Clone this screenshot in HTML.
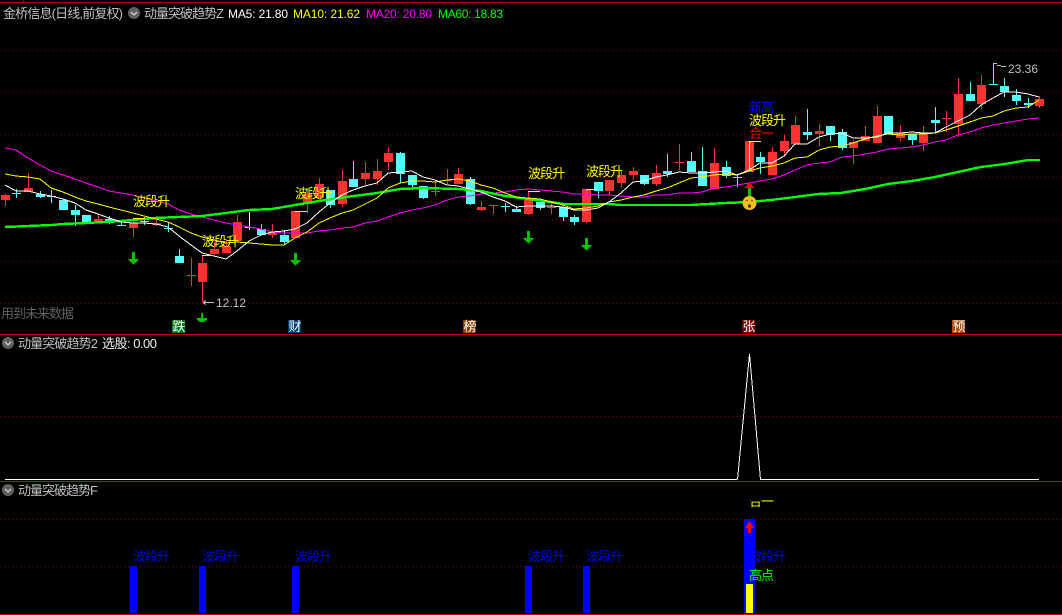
<!DOCTYPE html>
<html><head><meta charset="utf-8"><style>
html,body{margin:0;padding:0;background:#000;width:1062px;height:615px;overflow:hidden}
svg{display:block;position:absolute;left:0;top:0}
text{font-family:"WenQuanYi Zen Hei","Liberation Sans","Noto Sans CJK SC",sans-serif;font-size:13px;letter-spacing:-1px}
.l{font-family:"Liberation Sans",sans-serif;font-size:12px;letter-spacing:0}
</style></head><body>
<svg width="1062" height="615" viewBox="0 0 1062 615" xmlns="http://www.w3.org/2000/svg">
<defs><clipPath id="c1"><rect x="740" y="500" width="50" height="8"/></clipPath></defs>
<g shape-rendering="crispEdges">
<!-- grid -->
<path d="M0 50.5H1062M0 92.5H1062M0 134.5H1062M0 177.5H1062M0 219.5H1062M0 261.5H1062M0 303.5H1062M0 416.5H1062M0 519.5H1062M0 566.5H1062" stroke="#800000" stroke-width="1" stroke-dasharray="1 3" fill="none"/>
<!-- separators -->
<path d="M0 2.5H1062M23.5 0V3" stroke="#a00000" fill="none"/>
<path d="M0 334.5H1062M0 481.5H1062M0 614.5H1062" stroke="#c00000" fill="none"/>
<!-- red candles -->
<path fill="#ff3232" d="M1 195h9V200h-9zM24 188h9V192h-9zM94 219h9V222h-9zM129 223h9V228h-9zM152 223h9V225h-9zM198 263h9V282h-9zM210 249h9V254h-9zM222 246h9V253h-9zM233 222h9V241h-9zM268 232h9V235h-9zM291 211h9V238h-9zM303 194h9V204h-9zM315 184h9V198h-9zM338 181h9V204h-9zM361 173h9V179h-9zM373 171h9V179h-9zM384 153h9V162h-9zM454 174h9V184h-9zM477 207h9V210h-9zM524 200h9V214h-9zM582 189h9V222h-9zM605 180h9V191h-9zM617 175h9V183h-9zM629 171h9V175h-9zM652 173h9V184h-9zM710 163h9V189h-9zM745 141h9V172h-9zM768 152h9V175h-9zM780 141h9V151h-9zM791 125h9V144h-9zM815 131h9V134h-9zM849 142h9V148h-9zM861 136h9V141h-9zM873 116h9V143h-9zM896 133h9V138h-9zM919 133h9V143h-9zM954 94h9V124h-9zM977 85h9V104h-9zM1035 99h9V106h-9z"/>
<path fill="none" stroke="#ff3232" d="M5.5 194V206M28.5 173V192M98.5 215V223M133.5 220V237M156.5 220V226M202.5 255V302M214.5 242V255M226.5 240V253M237.5 215V242M272.5 224V238M307.5 188V213M319.5 178V198M342.5 170V207M365.5 162V185M377.5 159V185M388.5 147V170M458.5 168V184M481.5 201V211M528.5 191V215M586.5 189V223M609.5 180V195M621.5 170V188M633.5 167V180M656.5 165V186M714.5 148V189M772.5 147V175M784.5 135V157M795.5 116V144M819.5 124V146M853.5 140V164M865.5 126V141M877.5 106V143M900.5 125V141M923.5 126V151M958.5 78V137M981.5 75V109M1039.5 96V108
M191.5 258V286M187 275.5h9M435.5 182V196M431 191.5h9M447.5 169V184M443 180.5h9M493.5 205V214M489 205.5h9M551.5 204V214M547 207.5h9M679.5 144V170M675 162.5h9M946.5 111V132M942 118.5h9"/>
<!-- cyan candles -->
<path fill="#54fcfc" d="M36 194h9V197h-9zM59 200h9V210h-9zM71 210h9V215h-9zM82 215h9V223h-9zM105 219h9V223h-9zM175 256h9V263h-9zM257 229h9V235h-9zM280 235h9V242h-9zM326 190h9V205h-9zM349 179h9V187h-9zM396 153h9V174h-9zM408 175h9V185h-9zM419 186h9V198h-9zM466 179h9V204h-9zM512 209h9V212h-9zM536 202h9V208h-9zM559 207h9V217h-9zM570 217h9V222h-9zM594 182h9V191h-9zM640 175h9V184h-9zM663 171h9V174h-9zM687 161h9V172h-9zM698 171h9V186h-9zM722 167h9V176h-9zM756 157h9V162h-9zM803 132h9V135h-9zM826 126h9V135h-9zM838 132h9V148h-9zM884 116h9V134h-9zM908 134h9V140h-9zM931 120h9V123h-9zM966 94h9V101h-9zM1000 86h9V92h-9zM1012 95h9V101h-9zM1024 103h9V105h-9z"/>
<path fill="none" stroke="#54fcfc" d="M40.5 191V198M75.5 205V226M109.5 216V224M179.5 249V256M261.5 224V235M284.5 230V244M330.5 190V208M353.5 161V187M400.5 152V183M412.5 175V190M423.5 186V199M470.5 177V205M516.5 206V212M540.5 202V210M563.5 207V221M574.5 215V225M598.5 182V198M644.5 175V185M667.5 154V177M691.5 152V172M702.5 147V186M726.5 161V178M760.5 152V174M807.5 109V140M830.5 126V141M842.5 129V150M912.5 134V145M935.5 107V133M970.5 82V101M1004.5 78V97M1016.5 89V105M1028.5 98V108
M16.5 189V198M12 193.5h9M51.5 190V203M47 196.5h9M121.5 220V226M117 225.5h9M144.5 217V225M140 221.5h9M168.5 222V232M164 228.5h9M505.5 203V212M501 206.5h9M737.5 174V187M733 177.5h9M993.5 63V85M989 84.5h9"/>
<path fill="none" stroke="#fff" d="M249.5 212V230M245 227.5h9"/>
<!-- MA lines -->
<polyline fill="none" stroke="#ff00ff" points="5,148 16,150 28,158 40,165 51,171 63,175 75,179 86,183 98,187 109,191 121,193 133,195 144,198 156,201 168,204 179,210 191,214 202,217 214,220 226,223 237,225 249,227 261,229 272,232 284,233 295,233 307,233 319,231 330,230 342,228 353,227 365,223 377,221 388,217 400,213 412,210 423,208 435,205 447,200 458,197 470,196 481,194 493,193 505,192 516,190 528,189 540,190 551,191 563,192 574,194 586,194 598,195 609,195 621,196 633,197 644,197 656,195 667,195 679,193 691,193 702,192 714,188 726,187 737,185 749,183 760,181 772,179 784,175 795,170 807,165 819,163 830,162 842,157 853,156 865,154 877,152 888,149 900,148 912,147 923,145 935,142 946,140 958,135 970,132 981,128 993,125 1004,123 1016,121 1028,119 1039,118"/>
<polyline fill="none" stroke="#00ff00" stroke-width="2.4" points="5,227 28,226 52,225 63,224 87,223 121,221 155,218 179,217 202,216 226,213 249,210 272,209 295,205 319,201 354,196 377,193 400,189 423,188 458,189 481,191 505,196 528,199 551,202 563,204 609,204 621,205 691,205 708,204 726,203 749,202 771,200 795,197 818,194 841,193 865,189 888,184 912,181 935,177 958,172 981,167 1005,164 1028,160 1040,160"/>
<polyline fill="none" stroke="#ffff00" points="5,174 16,176 28,177 40,179 51,188 63,192 75,197 86,201 98,204 109,207 121,210 133,213 144,216 156,219 168,222 179,227 191,233 202,237 214,240 226,243 237,242 249,243 261,244 272,245 284,245 295,238 307,232 319,223 330,218 342,213 353,210 365,204 377,198 388,188 400,183 412,181 423,181 435,182 447,180 458,179 470,181 481,185 493,188 505,193 516,197 528,198 540,199 551,202 563,205 574,209 586,208 598,206 609,202 621,200 633,197 644,195 656,191 667,188 679,183 691,178 702,177 714,175 726,174 737,175 749,171 760,168 772,166 784,163 795,158 807,157 819,150 830,147 842,146 853,143 865,139 877,136 888,134 900,135 912,134 923,134 935,133 946,130 958,126 970,122 981,118 993,116 1004,111 1016,108 1028,107 1039,100"/>
<polyline fill="none" stroke="#fff" points="5,185 16,191 28,191 40,194 51,196 63,199 75,203 86,210 98,214 109,218 121,222 133,223 144,223 156,224 168,227 179,236 191,245 202,253 214,256 226,259 237,251 249,241 261,235 272,232 284,231 295,229 307,223 319,212 330,203 342,195 353,190 365,186 377,183 388,173 400,172 412,171 423,177 435,180 447,185 458,186 470,189 481,192 493,197 505,201 516,207 528,206 540,206 551,206 563,207 574,210 586,210 598,208 609,202 621,193 633,182 644,181 656,177 667,175 679,172 691,173 702,173 714,172 726,171 737,175 749,170 760,163 772,163 784,156 795,144 807,144 819,137 830,134 842,133 853,138 865,138 877,137 888,133 900,133 912,132 923,133 935,133 946,127 958,121 970,115 981,105 993,98 1004,92 1016,92 1028,94 1039,97"/>
<!-- signal step lines -->
<path fill="none" stroke="#ffff00" d="M133 218.5h12M202 255.5h11M295 211.5h12M528 191.5h12M586 189.5h12M749.5 141V171M749 141.5h12"/>
<path fill="none" stroke="#c0c0c0" d="M993 63.5h4M997 65.5h4M1001 66.5h5"/>
<path fill="none" stroke="#c0c0c0" d="M203 302.5h11M203 302.5l3 -2M203 302.5l3 2"/>
<!-- green arrows -->
<g fill="#00c000">
<path d="M132 252h3v7h4l-5.500 6l-5.500-6h4z"/>
<path d="M294 253h3v7h4l-5.500 6l-5.500-6h4z"/>
<path d="M527 231h3v7h4l-5.500 6l-5.500-6h4z"/>
<path d="M585 238h3v7h4l-5.500 6l-5.500-6h4z"/>
<path d="M201 313h2v5h4v2l-3 2h-4l-3-2v-2h4z"/>
</g>
<!-- up arrow main -->
<rect x="748" y="188" width="3" height="9" fill="#00c000"/>
<path d="M749.500 182l5 6h-10z" fill="#ff0000"/>
<!-- panel 2 peak and baseline -->
<path fill="none" stroke="#fff" d="M5 479.500H737M760 479.500H1039M737.500 479.500L749.500 354L760.500 479.500"/>
<!-- panel 3 bars -->
<path fill="#0000ff" d="M130 566h7v47h-7zM199 566h7v47h-7zM292 566h7v47h-7zM525 566h7v47h-7zM583 566h7v47h-7zM744 519h11v94h-11z"/>
<rect x="746" y="584" width="7" height="29" fill="#ffff00"/>
<path d="M749.500 521l4.500 7h-3v5h-3v-5h-3z" fill="#ff0000"/>
<!-- label boxes -->
<rect x="172" y="320" width="13" height="13" fill="#007a10"/>
<rect x="288" y="320" width="13" height="13" fill="#003c78"/>
<rect x="463" y="320" width="13" height="13" fill="#804000"/>
<rect x="742" y="320" width="13" height="13" fill="#800000"/>
<rect x="952" y="320" width="13" height="13" fill="#b04a00"/>
</g>
<!-- smiley -->
<circle cx="749.500" cy="203" r="7" fill="#f0c020"/>
<circle cx="747" cy="200.500" r=".8" fill="#553300"/>
<circle cx="752" cy="200.500" r=".8" fill="#553300"/>
<ellipse cx="749.500" cy="206" rx="1.500" ry="1.800" fill="#553300"/>
<!-- header toggles -->
<g>
<circle cx="134" cy="13" r="6" fill="#606060"/><path d="M131 12l3 3l3-3" fill="none" stroke="#d0d0d0" stroke-width="1.300"/>
<circle cx="8" cy="343" r="6" fill="#606060"/><path d="M5 342l3 3l3-3" fill="none" stroke="#d0d0d0" stroke-width="1.300"/>
<circle cx="8" cy="490" r="6" fill="#606060"/><path d="M5 489l3 3l3-3" fill="none" stroke="#d0d0d0" stroke-width="1.300"/>
</g>
<!-- header text -->
<text x="3" y="18" fill="#c0c0c0" textLength="119">金桥信息(日线,前复权)</text>
<text x="144" y="18" fill="#c0c0c0" textLength="79">动量突破趋势Z</text>
<text class="l" x="228" y="18" fill="#ffffff" textLength="60">MA5: 21.80</text>
<text class="l" x="293" y="18" fill="#ffff00" textLength="67">MA10: 21.62</text>
<text class="l" x="366" y="18" fill="#ff00ff" textLength="66">MA20: 20.80</text>
<text class="l" x="438" y="18" fill="#00ff00" textLength="65">MA60: 18.83</text>
<text x="18" y="348" fill="#c0c0c0" textLength="79">动量突破趋势2</text>
<text x="102" y="348" fill="#f0f0f0" textLength="54">选股: 0.00</text>
<text x="18" y="495" fill="#c0c0c0" textLength="79">动量突破趋势F</text>
<text x="1" y="318" fill="#606060">用到未来数据</text>
<!-- price labels -->
<text class="l" x="216" y="307" fill="#c0c0c0" textLength="30">12.12</text>
<text class="l" x="1008" y="73" fill="#c0c0c0" textLength="30">23.36</text>
<!-- signals main -->
<g fill="#ffff00">
<text x="133" y="206">波段升</text>
<text x="202" y="246">波段升</text>
<text x="295" y="198">波段升</text>
<text x="528" y="178">波段升</text>
<text x="586" y="176">波段升</text>
<text x="749" y="125">波段升</text>
</g>
<text x="749" y="112" fill="#0000ff">新高</text>
<text x="749" y="138" fill="#ff0000">合一</text>
<!-- labels -->
<g fill="#ffffff">
<text x="172.500" y="331">跌</text>
<text x="288.500" y="331">财</text>
<text x="463.500" y="331">榜</text>
<text x="742.500" y="331">张</text>
<text x="952.500" y="331">预</text>
</g>
<!-- panel 3 text -->
<g fill="#0000e0">
<text x="133" y="561">波段升</text>
<text x="202" y="561">波段升</text>
<text x="295" y="561">波段升</text>
<text x="528" y="561">波段升</text>
<text x="586" y="561">波段升</text>
<text x="749" y="561">波段升</text>
</g>
<text x="749" y="580" fill="#00ff00">高点</text>
<text x="749" y="506" fill="#ffff00" clip-path="url(#c1)">合一</text>
</svg>
</body></html>
